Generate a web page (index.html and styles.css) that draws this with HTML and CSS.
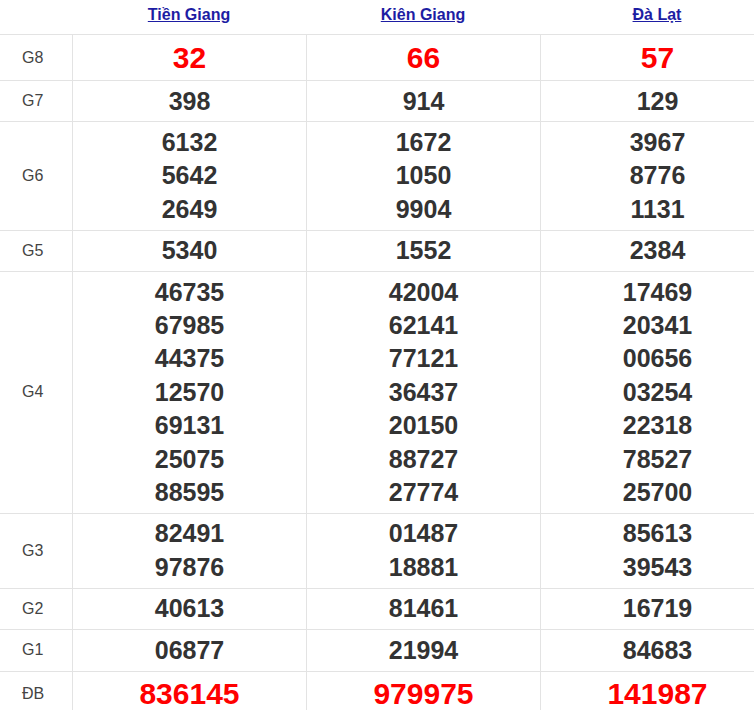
FILE: index.html
```html
<!DOCTYPE html>
<html lang="vi">
<head>
<meta charset="utf-8">
<title>Kết quả xổ số</title>
<link rel="stylesheet" href="styles.css">
</head>
<body>
<div class="wrap">
  <div class="grid">
    <div class="hd"></div>
    <div class="hd"><a href="#">Tiền Giang</a></div>
    <div class="hd"><a href="#">Kiên Giang</a></div>
    <div class="hd"><a href="#">Đà Lạt</a></div>

    <div class="lbl">G8</div>
    <div class="cell big red"><div>32</div></div>
    <div class="cell big red"><div>66</div></div>
    <div class="cell big red"><div>57</div></div>

    <div class="lbl">G7</div>
    <div class="cell"><div>398</div></div>
    <div class="cell"><div>914</div></div>
    <div class="cell"><div>129</div></div>

    <div class="lbl">G6</div>
    <div class="cell"><div>6132</div><div>5642</div><div>2649</div></div>
    <div class="cell"><div>1672</div><div>1050</div><div>9904</div></div>
    <div class="cell"><div>3967</div><div>8776</div><div>1131</div></div>

    <div class="lbl">G5</div>
    <div class="cell"><div>5340</div></div>
    <div class="cell"><div>1552</div></div>
    <div class="cell"><div>2384</div></div>

    <div class="lbl">G4</div>
    <div class="cell"><div>46735</div><div>67985</div><div>44375</div><div>12570</div><div>69131</div><div>25075</div><div>88595</div></div>
    <div class="cell"><div>42004</div><div>62141</div><div>77121</div><div>36437</div><div>20150</div><div>88727</div><div>27774</div></div>
    <div class="cell"><div>17469</div><div>20341</div><div>00656</div><div>03254</div><div>22318</div><div>78527</div><div>25700</div></div>

    <div class="lbl">G3</div>
    <div class="cell"><div>82491</div><div>97876</div></div>
    <div class="cell"><div>01487</div><div>18881</div></div>
    <div class="cell"><div>85613</div><div>39543</div></div>

    <div class="lbl">G2</div>
    <div class="cell"><div>40613</div></div>
    <div class="cell"><div>81461</div></div>
    <div class="cell"><div>16719</div></div>

    <div class="lbl">G1</div>
    <div class="cell"><div>06877</div></div>
    <div class="cell"><div>21994</div></div>
    <div class="cell"><div>84683</div></div>

    <div class="lbl">ĐB</div>
    <div class="cell big red"><div>836145</div></div>
    <div class="cell big red"><div>979975</div></div>
    <div class="cell big red"><div>141987</div></div>
  </div>
</div>
</body>
</html>
```
FILE: styles.css
```css
html, body {
  margin: 0;
  padding: 0;
  background: #fff;
}
.wrap {
  width: 754px;
  overflow: hidden;
}
.grid {
  display: grid;
  grid-template-columns: 72px 234px 234px 234px;
  width: 774px;
  font-family: "Liberation Sans", Arial, sans-serif;
}
.grid > div {
  box-sizing: border-box;
  border-bottom: 1px solid #e3e3e3;
}
.hd {
  height: 35px;
  display: flex;
  align-items: center;
  justify-content: center;
  padding-bottom: 4px;
}
.hd a {
  color: #1d1da3;
  font-weight: bold;
  font-size: 16px;
  text-decoration: underline;
}
.lbl {
  display: flex;
  align-items: center;
  padding-left: 22px;
  font-size: 16px;
  color: #444;
}
.cell {
  border-left: 1px solid #e3e3e3;
  text-align: center;
  padding: 3.5px 0;
  font-weight: bold;
  font-size: 25px;
  line-height: 33.4px;
  color: #333;
}
.cell.big {
  font-size: 30px;
  line-height: 38px;
}
.red {
  color: #f00;
}
```
